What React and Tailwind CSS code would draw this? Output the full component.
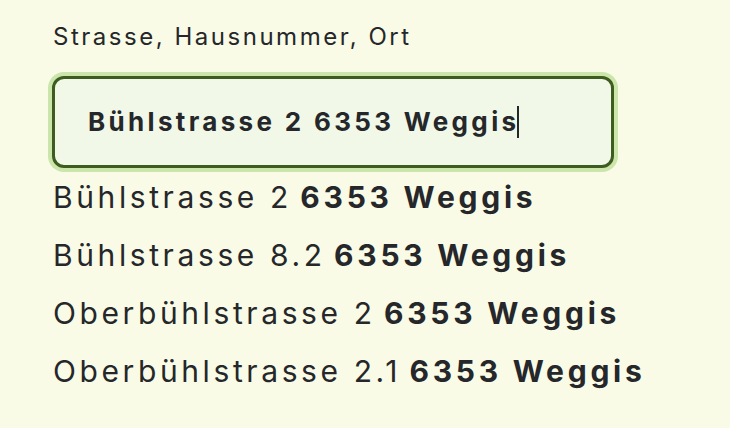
export default function App() {
  const rows = [
    ["Bühlstrasse 2", "6353 Weggis"],
    ["Bühlstrasse 8.2", "6353 Weggis"],
    ["Oberbühlstrasse 2", "6353 Weggis"],
    ["Oberbühlstrasse 2.1", "6353 Weggis"],
  ];
  return (
    <div
      className="w-[730px] h-[428px] bg-[#f9fbe6] text-[#25272a] pl-[52px] pt-[23px] overflow-hidden"
      style={{ fontFamily: "Inter, 'Noto Sans', sans-serif" }}
    >
      <div className="text-[24px] leading-[28px] tracking-[0.105em] pl-[1px]">Strasse, Hausnummer, Ort</div>
      <div className="mt-[25px] w-[562px] h-[92px] rounded-[12px] border-[3px] border-[#3e5c1f] bg-[#f1f8e8] shadow-[0_0_0_4px_#cce5ab] flex items-center pl-[33px]">
        <span className="text-[26px] font-bold leading-none tracking-[0.128em]">Bühlstrasse 2 6353 Weggis</span>
        <span className="inline-block w-[1.5px] h-[32px] bg-[#25272a] ml-[-2px]" />
      </div>
      <div className="pl-[1px]">
        {rows.map(([a, b], i) => (
          <div key={i} className="text-[30px] leading-[58px] whitespace-nowrap">
            <span className="font-normal tracking-[0.12em]">{a}</span>{" "}
            <span className="font-bold tracking-[0.125em]">{b}</span>
          </div>
        ))}
      </div>
    </div>
  );
}
